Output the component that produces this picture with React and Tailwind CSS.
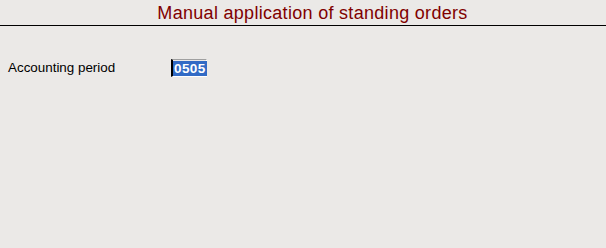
export default function App() {
  return (
    <div className="w-[606px] h-[248px] bg-[#ebe9e7] overflow-hidden" style={{ fontFamily: '"Liberation Sans", Arial, sans-serif' }}>
      <div className="h-[26px] border-b border-black flex items-end justify-center">
        <span className="text-[18px] leading-[20px] tracking-[0.3px] text-[#800000] mb-[2px] pl-[19px]">Manual application of standing orders</span>
      </div>
      <div className="flex items-center mt-[32px]">
        <div className="w-[171px] pl-[8px] text-[13.4px] text-black">Accounting period</div>
        <div className="w-[36px] h-[18px] border-l-[2px] border-t border-l-black border-t-[#a0a0a0] border-r border-b border-r-white border-b-white flex items-center pl-[0px]">
          <span className="bg-[#316ac5] text-white text-[13.5px] font-bold leading-[15px] px-[1px] tracking-[0.4px]">0505</span>
        </div>
      </div>
    </div>
  );
}
